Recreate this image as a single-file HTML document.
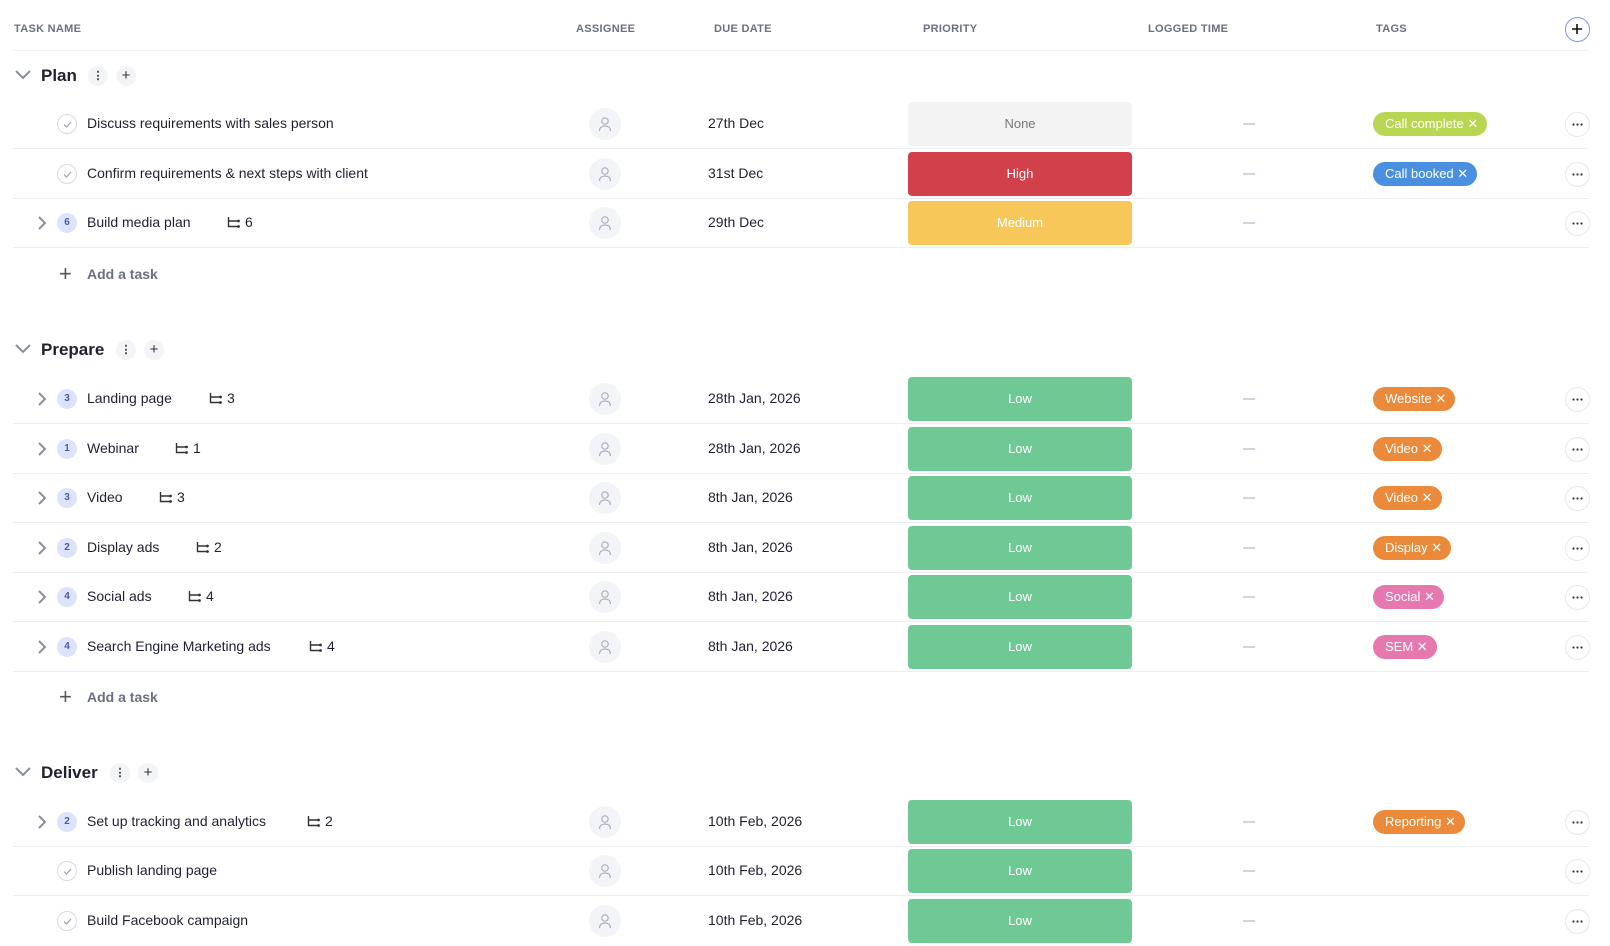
<!DOCTYPE html>
<html><head><meta charset="utf-8"><style>
*{box-sizing:border-box;margin:0;padding:0}
body{width:1610px;height:926px;overflow:hidden;background:#fff;font-family:"Liberation Sans",Arial,sans-serif;color:#1f2130;position:relative}
.a{position:absolute}
.hd{font-size:11px;font-weight:bold;letter-spacing:.3px;color:#6b7080;top:23px}
.hline{left:13px;width:1576px;top:50px;height:1px;background:#eef0f3}
.row{position:absolute;left:0;width:1610px;height:50px}
.row .ln{position:absolute;left:13px;width:1576px;top:49px;height:1px;background:#eceef2}
.txt{position:absolute;left:87px;top:16px;font-size:14px;white-space:nowrap}
.chev{position:absolute;left:35px;top:17px;width:14px;height:16px}
.badge{position:absolute;left:57px;top:15px;width:20px;height:20px;border-radius:50%;background:#dde3fb;color:#4a5ab8;font-size:10px;font-weight:bold;text-align:center;line-height:20px}
.chk{position:absolute;left:57px;top:15px;width:20px;height:20px;border-radius:50%;border:1px solid #d8dbe3}
.sub{position:absolute;top:16px;font-size:14px;white-space:nowrap}
.av{position:absolute;left:589px;top:9px;width:32px;height:32px;border-radius:50%;background:#f3f4f8}
.date{position:absolute;left:708px;top:16px;font-size:14px}
.pri{position:absolute;left:908px;top:3px;width:224px;height:44px;border-radius:4px;color:#fff;font-size:13px;text-align:center;line-height:44px}
.dash{position:absolute;left:1243px;top:24px;width:12px;height:2px;background:#cfd4e0}
.tag{position:absolute;left:1373px;top:13px;height:24px;border-radius:12px;color:#fff;font-size:13px;line-height:24px;padding:0 9px 0 12px;white-space:nowrap}
.more{position:absolute;left:1565px;top:13px;width:25px;height:25px;border-radius:50%;border:1px solid #e6e8ee}
.sec{position:absolute;left:0;height:40px;width:600px}
.sec .t{position:absolute;left:41px;top:10px;font-size:17px;font-weight:bold}
.sec .ic{position:absolute;top:10px;width:20px;height:20px;border-radius:50%;background:#f3f4f7;text-align:center;line-height:20px;font-size:15px;color:#333}
.add{position:absolute;left:0;height:40px}
.add .t{position:absolute;left:87px;top:12px;font-size:14px;font-weight:bold;color:#6b7080;white-space:nowrap}
</style></head><body>
<div class="a hd" style="left:14px">TASK NAME</div>
<div class="a hd" style="left:576px">ASSIGNEE</div>
<div class="a hd" style="left:714px">DUE DATE</div>
<div class="a hd" style="left:923px">PRIORITY</div>
<div class="a hd" style="left:1148px">LOGGED TIME</div>
<div class="a hd" style="left:1376px">TAGS</div>
<div class="a" style="left:1565px;top:17px;width:25px;height:25px;border-radius:50%;border:1.5px solid #8193e6"><svg class="a" style="left:5px;top:5px" width="12" height="12" viewBox="0 0 12 12"><path d="M6 1v10M1 6h10" stroke="#111" stroke-width="1.6"/></svg></div>
<div class="a hline"></div>

<script>
function chev(){return '<svg class="chev" viewBox="0 0 14 16"><path d="M4 2l6 6-6 6" fill="none" stroke="#8a8f9c" stroke-width="2"/></svg>'}
function subIcon(x,n){return '<svg class="sub" style="left:'+x+'px;top:19px" width="14" height="12" viewBox="0 0 14 12"><path d="M1.5 0v9.5h10M1.5 4h10" fill="none" stroke="#333" stroke-width="1.4"/><circle cx="11.5" cy="4" r="1.4" fill="#333"/><circle cx="11.5" cy="9.5" r="1.4" fill="#333"/></svg><div class="sub" style="left:'+(x+18)+'px">'+n+'</div>'}
var avSvg='<svg class="a" style="left:9px;top:8px" width="14" height="16" viewBox="0 0 14 16"><circle cx="7" cy="5" r="3.2" fill="none" stroke="#a9aebd" stroke-width="1.2"/><path d="M1.5 15c0-3.5 2.5-5 5.5-5s5.5 1.5 5.5 5" fill="none" stroke="#a9aebd" stroke-width="1.2"/></svg>';
var dots='<svg class="a" style="left:6px;top:10px" width="11" height="3" viewBox="0 0 11 3"><circle cx="1.5" cy="1.5" r="1.1" fill="#333"/><circle cx="5.5" cy="1.5" r="1.1" fill="#333"/><circle cx="9.5" cy="1.5" r="1.1" fill="#333"/></svg>';
var P={None:['#f3f3f4','#777'],High:['#d2414b','#fff'],Medium:['#f7c75a','#fff'],Low:['#6fc994','#fff']};
var T={lime:'#b9d653',blue:'#4a8fe0',orange:'#ea8a3a',pink:'#e678b0'};
function row(c,o){
 var h='<div class="row" style="top:'+(c-25)+'px">';
 if(o.b){h+=chev()+'<div class="badge">'+o.b+'</div>';}
 else h+='<div class="chk"><svg class="a" style="left:5px;top:6px" width="9" height="7" viewBox="0 0 9 7"><path d="M1 3.5l2.5 2.5L8 1" fill="none" stroke="#9aa0ad" stroke-width="1.2"/></svg></div>';
 h+='<div class="txt">'+o.n+'</div>';
 if(o.s)h+=subIcon(o.s,o.b);
 h+='<div class="av">'+avSvg+'</div><div class="date">'+o.d+'</div>';
 var p=P[o.p];h+='<div class="pri" style="background:'+p[0]+';color:'+p[1]+'">'+o.p+'</div>';
 h+='<div class="dash"></div>';
 if(o.t)h+='<div class="tag" style="background:'+T[o.tc]+'">'+o.t+' ✕</div>';
 h+='<div class="more">'+dots+'</div>';
 if(!o.nl)h+='<div class="ln"></div>';
 document.write(h+'</div>');
}
function sec(c,t,w){document.write('<div class="sec" style="top:'+(c-20)+'px"><svg class="a" style="left:15px;top:14px" width="16" height="10" viewBox="0 0 16 10"><path d="M1 1l7 7 7-7" fill="none" stroke="#8a8f9c" stroke-width="2"/></svg><div class="t">'+t+'</div><div class="ic" style="left:'+w+'px;font-size:11px;font-weight:bold">⋮</div><div class="ic" style="left:'+(w+28)+'px">+</div></div>')}
function add(c){document.write('<div class="add" style="top:'+(c-20)+'px"><div class="a" style="left:59px;top:11px;font-size:22px;color:#555;line-height:18px">+</div><div class="t">Add a task</div></div>')}
sec(76,'Plan',88);
row(124,{n:'Discuss requirements with sales person',d:'27th Dec',p:'None',t:'Call complete',tc:'lime'});
row(174,{n:'Confirm requirements &amp; next steps with client',d:'31st Dec',p:'High',t:'Call booked',tc:'blue'});
row(223,{b:6,n:'Build media plan',s:227,d:'29th Dec',p:'Medium'});
add(274);
sec(350,'Prepare',116);
row(399,{b:3,n:'Landing page',s:209,d:'28th Jan, 2026',p:'Low',t:'Website',tc:'orange'});
row(449,{b:1,n:'Webinar',s:175,d:'28th Jan, 2026',p:'Low',t:'Video',tc:'orange'});
row(498,{b:3,n:'Video',s:159,d:'8th Jan, 2026',p:'Low',t:'Video',tc:'orange'});
row(548,{b:2,n:'Display ads',s:196,d:'8th Jan, 2026',p:'Low',t:'Display',tc:'orange'});
row(597,{b:4,n:'Social ads',s:188,d:'8th Jan, 2026',p:'Low',t:'Social',tc:'pink'});
row(647,{b:4,n:'Search Engine Marketing ads',s:309,d:'8th Jan, 2026',p:'Low',t:'SEM',tc:'pink'});
add(697);
sec(773,'Deliver',110);
row(822,{b:2,n:'Set up tracking and analytics',s:307,d:'10th Feb, 2026',p:'Low',t:'Reporting',tc:'orange'});
row(871,{n:'Publish landing page',d:'10th Feb, 2026',p:'Low'});
row(921,{n:'Build Facebook campaign',d:'10th Feb, 2026',p:'Low',nl:1});
</script>
</body></html>
